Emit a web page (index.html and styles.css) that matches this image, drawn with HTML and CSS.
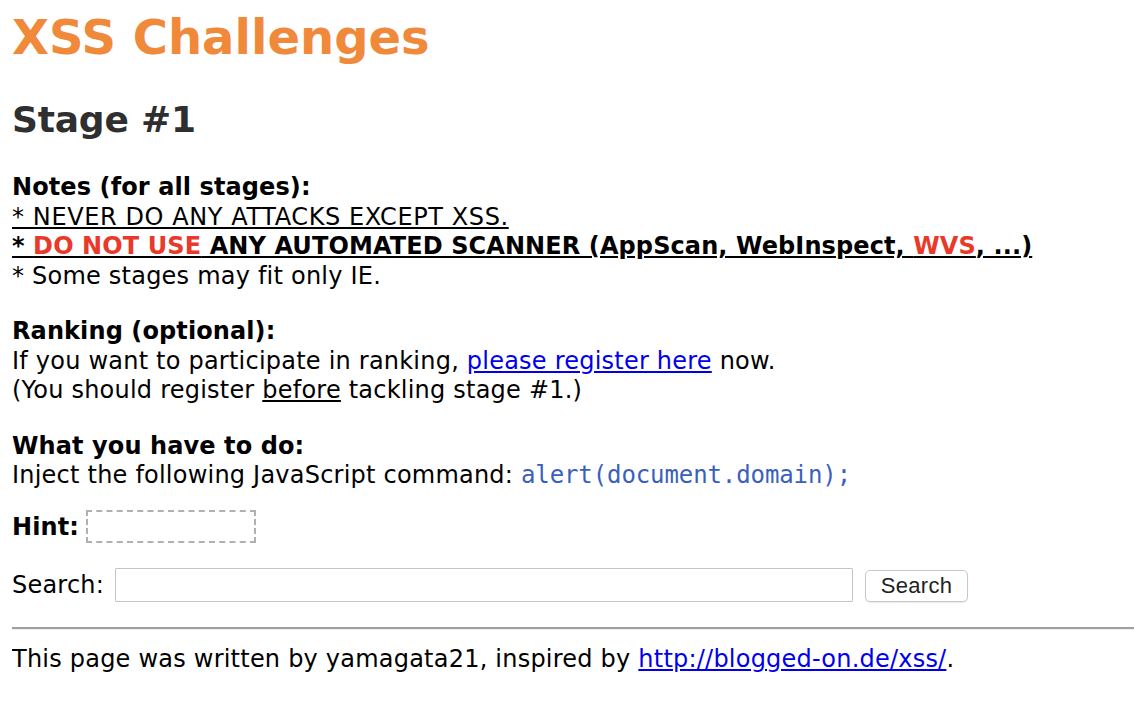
FILE: index.html
```html
<!DOCTYPE html>
<html>
<head>
<meta charset="utf-8">
<title>XSS Challenges (by yamagata21) - Stage #1</title>
<link rel="stylesheet" href="styles.css">
</head>
<body>
<h1 class="title">XSS Challenges</h1>
<h2 class="stage">Stage #1</h2>

<div class="section">
  <div class="label">Notes (for all stages):</div>
  <div class="line caps"><u>* NEVER DO ANY ATTACKS EXCEPT XSS.</u></div>
  <div class="line"><b><u>* <span class="red">DO NOT USE</span> ANY AUTOMATED SCANNER (AppScan, WebInspect, <span class="red">WVS</span>, ...)</u></b></div>
  <div class="line">* Some stages may fit only IE.</div>
</div>

<div class="section">
  <div class="label">Ranking (optional):</div>
  <div class="line">If you want to participate in ranking, <a href="#">please register here</a> now.</div>
  <div class="line">(You should register <u>before</u> tackling stage #1.)</div>
</div>

<div class="section">
  <div class="label">What you have to do:</div>
  <div class="line">Inject the following JavaScript command: <code class="cmd">alert(document.domain);</code></div>
</div>

<div class="hint-row">
  <b>Hint:</b>
  <span class="hint-box"></span>
</div>

<form class="search-row">
  <label class="search-label" for="q">Search:</label>
  <input class="search-input" id="q" type="text">
  <button class="search-btn" type="button">Search</button>
</form>

<hr class="rule">

<div class="footer">This page was written by yamagata21, inspired by <a href="#">http://blogged-on.de/xss/</a>.</div>
</body>
</html>
```

FILE: styles.css
```css
html, body {
  background: #ffffff;
}
body {
  margin: 0 0 0 12px;
  font-family: Verdana, "DejaVu Sans", sans-serif;
  font-size: 24px;
  color: #000000;
  letter-spacing: 0.22px;
  overflow-x: hidden;
}
b, .label, .title, .stage {
  letter-spacing: 0.1px;
}
.caps {
  letter-spacing: 0.6px;
}
.title {
  margin: 9px 0 0 0;
  font-size: 48px;
  font-weight: bold;
  color: #f0893a;
  line-height: 56px;
  letter-spacing: 0;
}
.stage {
  margin: 32px 0 0 0;
  font-size: 36px;
  font-weight: bold;
  color: #2f2f2f;
  line-height: 46px;
  letter-spacing: -0.2px;
}
.section {
  margin-top: 30px;
  line-height: 29.5px;
}
.section + .section {
  margin-top: 26px;
}
.section:last-of-type {
  margin-top: 25px;
}
.label {
  font-weight: bold;
}
.red {
  color: #e8392a;
}
a {
  color: #0000ee;
  text-decoration: underline;
}
.cmd {
  font-family: "DejaVu Sans Mono", Menlo, monospace;
  font-size: 24px;
  color: #3a5fbf;
  letter-spacing: -0.1px;
}
.hint-row {
  margin-top: 20px;
  display: flex;
  align-items: center;
  gap: 7px;
  height: 32px;
}
.hint-box {
  display: inline-block;
  width: 166px;
  height: 29px;
  border: 2px dashed #b0b0b0;
}
.search-row {
  margin: 25px 0 0 0;
  display: flex;
  align-items: center;
  height: 34px;
}
.search-label {
  margin-right: 11px;
}
.search-input {
  flex: 0 0 auto;
  width: 736px;
  height: 32px;
  box-sizing: content-box;
  padding: 0;
  border: 1px solid #c4c4c4;
  border-radius: 1px;
  margin: 0;
}
.search-btn {
  margin-left: 12px;
  width: 103px;
  height: 32px;
  margin-top: 2px;
  background: #ffffff;
  border: 1px solid #c8c8c8;
  border-radius: 5px;
  font-family: "Liberation Sans", Arial, sans-serif;
  font-size: 22px;
  letter-spacing: 0.3px;
  color: #222222;
  padding: 0;
  box-shadow: 0 1px 1px rgba(0,0,0,0.08);
}
.rule {
  margin: 25px 0 0 0;
  border: 0;
  border-top: 2px solid #a0a0a0;
  border-bottom: 1px solid #eeeeee;
  height: 0;
}
.footer {
  margin-top: 15px;
  line-height: 29.5px;
}
```
